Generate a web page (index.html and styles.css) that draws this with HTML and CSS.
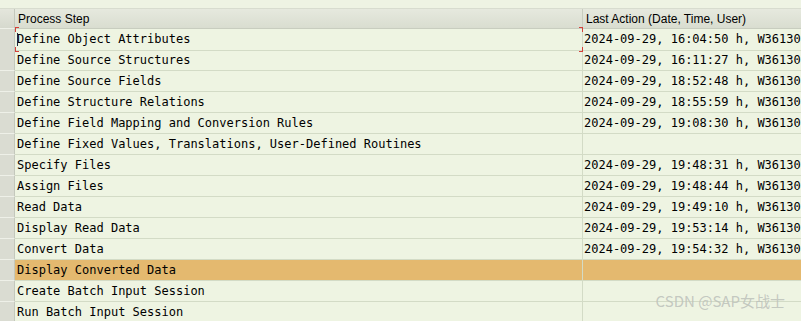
FILE: index.html
```html
<!DOCTYPE html>
<html lang="en">
<head>
  <meta charset="UTF-8">
  <title>Process Steps</title>
  <link rel="stylesheet" href="styles.css">
</head>
<body>
  <div class="top-strip"></div>
  <div class="grid">
    <div class="row head">
      <div class="sel"></div>
      <div class="cell step">Process Step</div>
      <div class="cell last">Last Action (Date, Time, User)</div>
    </div>
    <div class="row">
      <div class="sel"></div>
      <div class="cell step focus"><span class="caret"></span>Define Object Attributes</div>
      <div class="cell last">2024-09-29, 16:04:50 h, W36130</div>
    </div>
    <div class="row">
      <div class="sel"></div>
      <div class="cell step">Define Source Structures</div>
      <div class="cell last">2024-09-29, 16:11:27 h, W36130</div>
    </div>
    <div class="row">
      <div class="sel"></div>
      <div class="cell step">Define Source Fields</div>
      <div class="cell last">2024-09-29, 18:52:48 h, W36130</div>
    </div>
    <div class="row">
      <div class="sel"></div>
      <div class="cell step">Define Structure Relations</div>
      <div class="cell last">2024-09-29, 18:55:59 h, W36130</div>
    </div>
    <div class="row">
      <div class="sel"></div>
      <div class="cell step">Define Field Mapping and Conversion Rules</div>
      <div class="cell last">2024-09-29, 19:08:30 h, W36130</div>
    </div>
    <div class="row">
      <div class="sel"></div>
      <div class="cell step">Define Fixed Values, Translations, User-Defined Routines</div>
      <div class="cell last"></div>
    </div>
    <div class="row">
      <div class="sel"></div>
      <div class="cell step">Specify Files</div>
      <div class="cell last">2024-09-29, 19:48:31 h, W36130</div>
    </div>
    <div class="row">
      <div class="sel"></div>
      <div class="cell step">Assign Files</div>
      <div class="cell last">2024-09-29, 19:48:44 h, W36130</div>
    </div>
    <div class="row">
      <div class="sel"></div>
      <div class="cell step">Read Data</div>
      <div class="cell last">2024-09-29, 19:49:10 h, W36130</div>
    </div>
    <div class="row">
      <div class="sel"></div>
      <div class="cell step">Display Read Data</div>
      <div class="cell last">2024-09-29, 19:53:14 h, W36130</div>
    </div>
    <div class="row">
      <div class="sel"></div>
      <div class="cell step">Convert Data</div>
      <div class="cell last">2024-09-29, 19:54:32 h, W36130</div>
    </div>
    <div class="row selected">
      <div class="sel"></div>
      <div class="cell step">Display Converted Data</div>
      <div class="cell last"></div>
    </div>
    <div class="row">
      <div class="sel"></div>
      <div class="cell step">Create Batch Input Session</div>
      <div class="cell last"></div>
    </div>
    <div class="row">
      <div class="sel"></div>
      <div class="cell step">Run Batch Input Session</div>
      <div class="cell last"></div>
    </div>
  </div>
  <div class="watermark">CSDN @SAP女战士</div>
</body>
</html>
```

FILE: styles.css
```css
* {
  box-sizing: border-box;
}
body {
  margin: 0;
  background: #eef4e2;
  overflow: hidden;
  height: 321px;
  position: relative;
}
.top-strip {
  height: 9px;
  background: #eef3e3;
  border-bottom: 1px solid #d8dccf;
}
.row {
  display: grid;
  grid-template-columns: 15px 568px 1fr;
  height: 21px;
}
.sel {
  background: #dadcd2;
  border-right: 1px solid #c4c8bc;
  border-bottom: 1px solid #eef0e8;
}
.cell {
  font-family: "DejaVu Sans Mono", "Liberation Mono", monospace;
  font-size: 12px;
  line-height: 21px;
  color: #000;
  padding-left: 2px;
  white-space: nowrap;
  overflow: hidden;
  border-bottom: 1px solid #d3dbc6;
}
.step {
  border-right: 1px solid #d3dbc6;
}
.last {
  padding-left: 1px;
}
.head {
  height: 20px;
}
.head .sel {
  background: linear-gradient(#e4e6dc, #d6d9ce);
}
.head .cell {
  font-family: "Liberation Sans", Arial, sans-serif;
  font-size: 12px;
  line-height: 20px;
  padding-left: 3px;
  background: linear-gradient(#e6e9de, #d9ddd0);
  border-bottom: 1px solid #c8cdbf;
  border-right: 1px solid #c8cdbf;
}
.head .last {
  border-right: none;
}
.selected .cell {
  background: #e4b96f;
}
.focus {
  position: relative;
  overflow: visible;
}
.focus::before {
  content: "";
  position: absolute;
  top: -2px;
  bottom: -2px;
  left: 0;
  right: -1px;
  background:
    linear-gradient(#d4403a, #d4403a) left top / 4px 1px,
    linear-gradient(#d4403a, #d4403a) left top / 1px 5px,
    linear-gradient(#d4403a, #d4403a) left bottom / 4px 1px,
    linear-gradient(#d4403a, #d4403a) left bottom / 1px 5px,
    linear-gradient(#d4403a, #d4403a) right top / 4px 1px,
    linear-gradient(#d4403a, #d4403a) right top / 1px 5px,
    linear-gradient(#d4403a, #d4403a) right bottom / 4px 1px,
    linear-gradient(#d4403a, #d4403a) right bottom / 1px 5px;
  background-repeat: no-repeat;
}
.caret {
  position: absolute;
  left: 2px;
  top: 4px;
  width: 1px;
  height: 13px;
  background: #1a2a40;
}
.watermark {
  position: absolute;
  right: 16px;
  bottom: 10px;
  font-family: "Noto Sans CJK SC", "Liberation Sans", sans-serif;
  font-size: 15px;
  color: rgba(190, 195, 188, 0.9);
}
```
